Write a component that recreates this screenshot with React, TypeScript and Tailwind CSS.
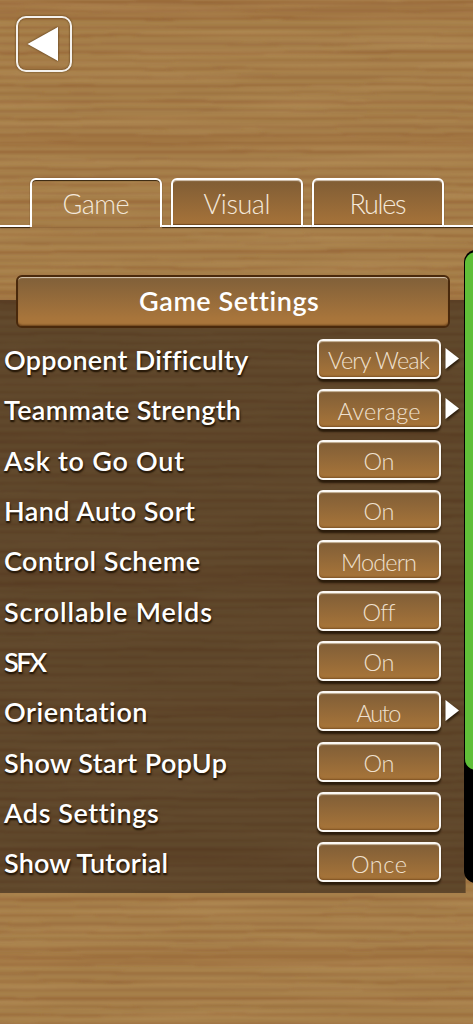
import React, { useLayoutEffect, useRef, useState } from "react";

type FitProps = { text: string; width: number; className?: string };

/** Tracks a line of text out (or in) until it fills the given width. */
function Fit({ text, width, className = "" }: FitProps) {
  const ref = useRef<HTMLSpanElement>(null);
  const [spacing, setSpacing] = useState(0);
  useLayoutEffect(() => {
    const natural = ref.current?.getBoundingClientRect().width ?? width;
    setSpacing((width - natural) / Math.max(1, text.length - 1));
  }, [text, width]);
  return (
    <span
      ref={ref}
      className={`inline-block whitespace-nowrap ${className}`}
      style={{ letterSpacing: spacing, marginRight: -spacing }}
    >
      {text}
    </span>
  );
}

const bands = [0, 34, 72, 108, 142, 176, 212, 238];

function Wood() {
  const rows = Array.from({ length: 124 }, (_, i) => i);
  return (
    <svg className="absolute inset-0 h-full w-full" viewBox="0 0 473 1024" preserveAspectRatio="none">
      <defs>
        <filter id="grain" x="-5%" y="-2%" width="110%" height="104%">
          <feTurbulence type="fractalNoise" baseFrequency="0.009 0.05" numOctaves="2" seed="7" result="n" />
          <feDisplacementMap in="SourceGraphic" in2="n" scale="4" xChannelSelector="R" yChannelSelector="G" />
          <feGaussianBlur stdDeviation="2.5 0.9" />
        </filter>
        <filter id="fiber" x="0" y="0" width="100%" height="100%">
          <feTurbulence type="fractalNoise" baseFrequency="0.004 0.1" numOctaves="3" seed="12" />
          <feColorMatrix values="0 0 0 0 0.54  0 0 0 0 0.33  0 0 0 0 0.13  1.7 0 0 0 -0.66" />
        </filter>
      </defs>
      <rect width="473" height="1024" fill="#a67f4a" />
      <g filter="url(#grain)">
        {rows.map((i) => (
          <rect key={i} x="-20" y={i * 8.3 + 1} width="513" height={i % 3 === 0 ? 3.2 : 2.3} fill="#935f31" opacity={i % 2 ? 0.45 : 0.62} />
        ))}
        {bands.map((k, i) => (
          <rect key={k} x="-20" y={k * 4} width="513" height={i % 2 ? 12 : 20} fill="#935f31" opacity="0.28" />
        ))}
      </g>
      <rect width="473" height="1024" filter="url(#fiber)" opacity="0.4" />
    </svg>
  );
}

const tabs = [
  { name: "Game", width: 67, active: true },
  { name: "Visual", width: 67, active: false },
  { name: "Rules", width: 57, active: false },
];

const rows = [
  { label: "Opponent Difficulty", lw: 243, value: "Very Weak", vw: 102, arrow: true },
  { label: "Teammate Strength", lw: 237, value: "Average", vw: 83, arrow: true },
  { label: "Ask to Go Out", lw: 180, value: "On", vw: 31, arrow: false },
  { label: "Hand Auto Sort", lw: 191, value: "On", vw: 31, arrow: false },
  { label: "Control Scheme", lw: 196, value: "Modern", vw: 76, arrow: false },
  { label: "Scrollable Melds", lw: 208, value: "Off", vw: 32, arrow: false },
  { label: "SFX", lw: 43, value: "On", vw: 31, arrow: false },
  { label: "Orientation", lw: 144, value: "Auto", vw: 45, arrow: true },
  { label: "Show Start PopUp", lw: 223, value: "On", vw: 31, arrow: false },
  { label: "Ads Settings", lw: 154, value: "", vw: 0, arrow: false },
  { label: "Show Tutorial", lw: 164, value: "Once", vw: 56, arrow: false },
];

export default function App() {
  return (
    <div className="relative h-[1024px] w-full overflow-hidden bg-[#a17844] font-['Lato',sans-serif] text-white">
      <Wood />
      <div className="relative flex h-full flex-col">
        <header className="h-[178px] shrink-0 pt-4 pl-4">
          <button className="flex h-14 w-14 items-center justify-center rounded-[10px] border-2 border-[#f4f1ed] shadow-[0_0_2px_#4a3010,inset_0_0_2px_#4a3010]">
            <svg className="mr-[2px] h-[36px] w-[32px] drop-shadow-[0_0_1px_#4a3010]" viewBox="0 0 32 36">
              <path d="M0.5 18 L31 1 V35 Z" fill="white" />
            </svg>
          </button>
        </header>

        <nav className="flex h-[49px] shrink-0 items-end">
          <div className="h-[2px] w-[30px] bg-white shadow-[0_1px_1px_#35240f]" />
          {tabs.map((tab, i) => (
            <React.Fragment key={tab.name}>
              {i > 0 && <div className="h-[2px] w-[9px] bg-white shadow-[0_1px_1px_#35240f]" />}
              <button
                className={
                  tab.active
                    ? "flex h-[49px] w-[132px] items-center justify-center rounded-t-[6px] border-2 border-b-0 border-white text-[27px] leading-none font-light shadow-[inset_0_2px_1px_-1px_#35240f,0_0_1px_#35240f]"
                    : "flex h-[49px] w-[132px] items-center justify-center rounded-t-[6px] border-2 border-white bg-linear-to-b from-[#805d35] to-[#a67339] pt-[2px] text-[27px] leading-none font-light shadow-[inset_0_2px_1px_-1px_#d5c8b8,inset_0_-1px_1px_#70491f,0_1px_1px_#35240f]"
                }
              >
                <Fit text={tab.name} width={tab.width} className="text-[#f4e8da]" />
              </button>
            </React.Fragment>
          ))}
          <div className="h-[2px] flex-1 bg-white shadow-[0_1px_1px_#35240f]" />
        </nav>

        <main className="mt-[73px] h-[593px] w-[466px] shrink-0 border-r border-[#795933] bg-[#1e160f]/52">
          <h1 className="-mt-[25px] ml-4 flex h-[53px] w-[434px] items-center justify-center rounded-[6px] border-2 border-[#49290c] bg-linear-to-b from-[#806039] to-[#a8753b] to-85% text-[27px] leading-none font-semibold shadow-[inset_0_2px_1px_-1px_#d8c9b5,inset_0_-2px_2px_-1px_#69401a]">
            <Fit text="Game Settings" width={179} className="-mt-[2px] ml-[-8px]" />
          </h1>
          <div className="mt-[11px] flex flex-col">
            {rows.map((row) => (
              <div key={row.label} className="flex h-[50.35px] items-start">
                <div className="flex h-[41px] w-[317px] items-center pl-1 text-[27px] leading-none font-semibold [text-shadow:0_2px_1px_#2b1c0b,1px_2px_2px_#2b1c0b]">
                  <Fit text={row.label} width={row.lw} />
                </div>
                <button className="flex h-[40px] w-[124px] shrink-0 items-center justify-center rounded-[6px] border-2 border-[#fbf8f4] bg-linear-to-b from-[#805e37] to-[#a87539] pt-1 text-[23.5px] leading-none font-light shadow-[inset_0_2px_1px_-1px_#c9b89f,inset_0_-2px_2px_-1px_#7c5022,0_3px_2px_#2b1c0b]">
                  {row.value && <Fit text={row.value} width={row.vw} className="text-[#efe0ce]" />}
                </button>
                {row.arrow && (
                  <svg className="mt-[8px] ml-[4px] h-[24px] w-[15px] overflow-visible drop-shadow-[1px_2px_1px_#2b1c0b]" viewBox="0 0 15 24">
                    <path d="M0.5 1 L14 11.5 L0.5 22 Z" fill="white" />
                  </svg>
                )}
              </div>
            ))}
          </div>
        </main>
      </div>
      <div className="absolute top-[250px] left-[464px] h-[633px] w-[26px] overflow-hidden rounded-[12px] bg-black pt-[2px] pl-px">
        <div className="h-[518px] w-[24px] rounded-[11px] bg-[#60bf38]" />
      </div>
    </div>
  );
}
